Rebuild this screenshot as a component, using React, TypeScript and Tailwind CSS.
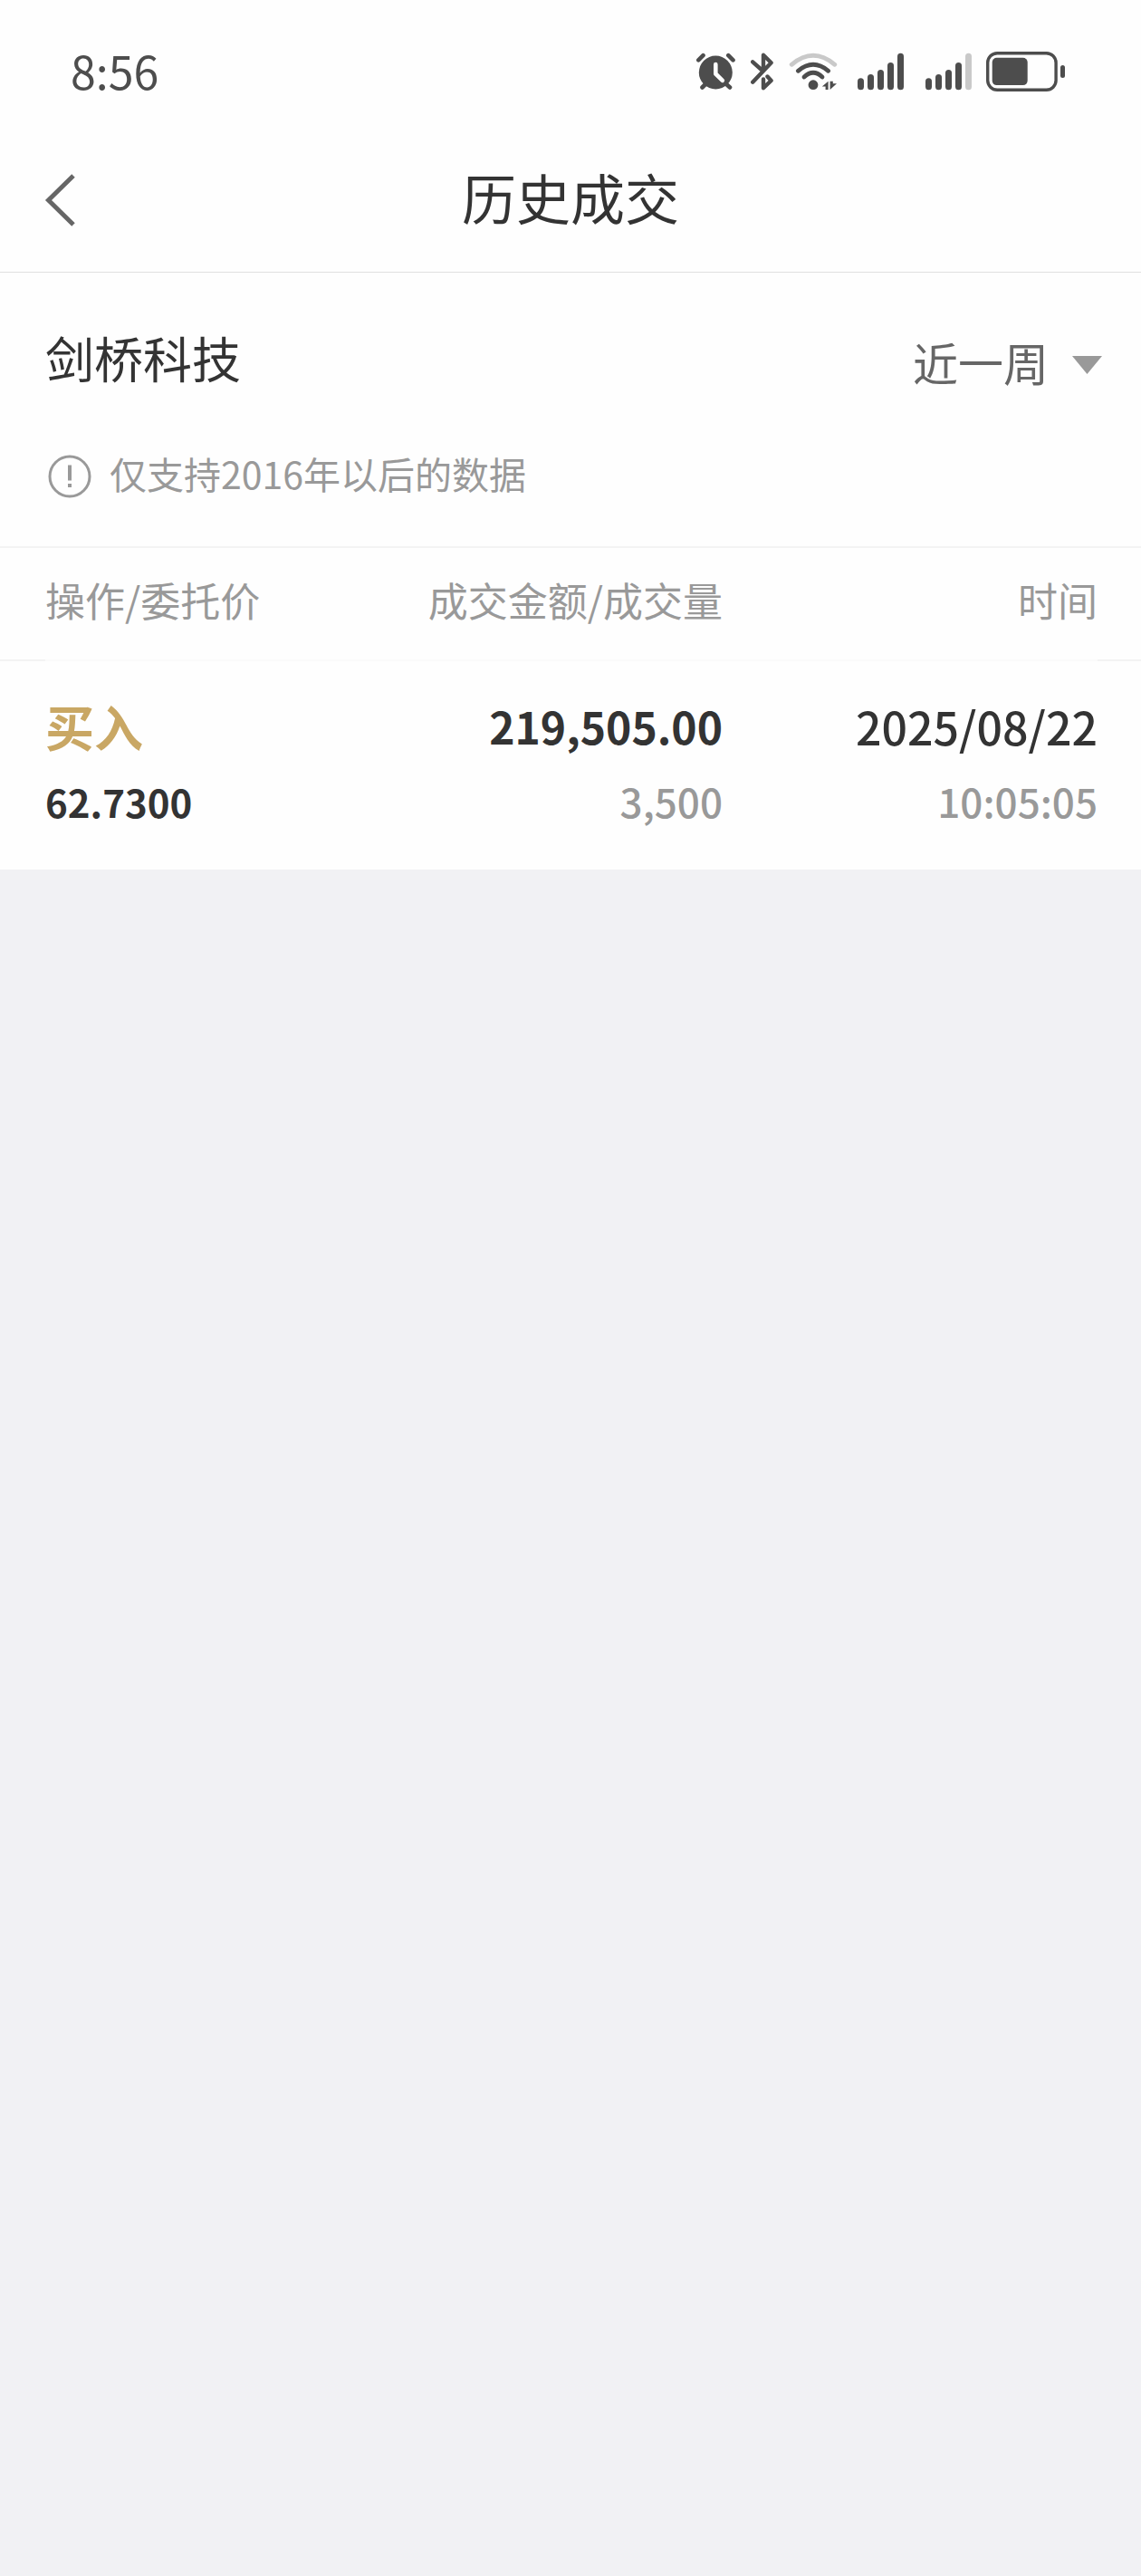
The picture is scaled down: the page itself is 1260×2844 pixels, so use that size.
import React from 'react';

const trades = [
  {
    id: 1,
    action: '买入',
    price: '62.7300',
    amount: '219,505.00',
    volume: '3,500',
    date: '2025/08/22',
    time: '10:05:05',
  },
];

const AlarmIcon = () => (
  <svg width="44" height="42" viewBox="0 0 44 42" fill="none" strokeLinecap="round" strokeLinejoin="round">
    <circle cx="21.3" cy="22" r="18.5" fill="#4d4d4d" />
    <path d="M2.3 8.4L7.5 3.2M35.3 3.2L40.5 8.4M6.5 38.5L12 33M37 38.5L31 33" stroke="#4d4d4d" strokeWidth="4.6" />
    <path d="M21.3 13V23.5L28.8 30.8" stroke="#fff" strokeWidth="4.6" />
  </svg>
);

const BluetoothIcon = () => (
  <svg width="26" height="42" viewBox="0 0 26 42" fill="none" stroke="#4d4d4d" strokeWidth="4.4" strokeLinecap="round" strokeLinejoin="round">
    <path d="M2.2 10.3L12.5 19.5M2.2 32.7L22.6 11.2L14 2.8V19" />
    <path d="M18.5 26.5L22.6 31L14 39.2V29.5" />
  </svg>
);

const WifiIcon = () => (
  <svg width="54" height="42" viewBox="0 0 54 42" fill="none" strokeWidth="4.8" strokeLinecap="round">
    <path d="M3.2 13.3Q27 -6.7 50.8 13.3" stroke="#c9c9c9" />
    <path d="M10.3 20.3Q27 6.3 43.7 20.3M17 27Q27 17.6 37 27" stroke="#4d4d4d" />
    <circle cx="27" cy="35.7" r="5.4" fill="#4d4d4d" />
    <path d="M36.8 37.5L43.6 31.8V41H40.6V37.5ZM45.6 31.8V41L53 34.2H48.8V31.8Z" fill="#4d4d4d" />
  </svg>
);

const SignalIcon = ({ weak = false }: { weak?: boolean }) => (
  <svg width="51" height="42" viewBox="0 0 51 42" fill="#4d4d4d">
    <rect x="0" y="28.3" width="7" height="13" rx="3.5" />
    <rect x="11" y="24" width="7" height="17.3" rx="3.5" />
    <rect x="22" y="19" width="7" height="22.3" rx="3.5" />
    <rect x="33" y="11" width="7" height="30.3" rx="3.5" />
    <rect x="44" y="0.7" width="7" height="40.6" rx="3.5" fill={weak ? '#c9c9c9' : '#4d4d4d'} />
  </svg>
);

const BatteryIcon = () => (
  <svg width="87" height="44" viewBox="0 0 87 44" fill="none">
    <rect x="1.7" y="1.7" width="75.4" height="40.6" rx="10.5" stroke="#4d4d4d" strokeWidth="3.4" />
    <rect x="6.7" y="6.7" width="39" height="30.4" rx="5" fill="#4d4d4d" />
    <rect x="82" y="15" width="5" height="14" rx="2.5" fill="#4d4d4d" />
  </svg>
);

const StatusBar = () => (
  <div className="flex h-[142px] items-center justify-between pt-4 pr-[84px] pl-[78px]">
    <span className="pb-1 text-[50px] leading-none text-[#4d4d4d]">8:56</span>
    <div className="flex items-center gap-4">
      <AlarmIcon />
      <BluetoothIcon />
      <WifiIcon />
      <div className="flex gap-6 pl-1.5">
        <SignalIcon />
        <SignalIcon weak />
      </div>
      <BatteryIcon />
    </div>
  </div>
);

const NavBar = () => (
  <header className="grid h-[159px] grid-cols-[1fr_auto_1fr] items-center border-b border-[#e0e0e0]">
    <button type="button" aria-label="返回" className="justify-self-start py-6 pr-6 pl-12">
      <svg width="36" height="60" viewBox="0 0 36 60" fill="none" stroke="#666" strokeWidth="5">
        <path d="M33 3L5.5 30L33 57" />
      </svg>
    </button>
    <h1 className="pb-2 text-[60px] leading-none text-[#333]">历史成交</h1>
  </header>
);

const Filter = () => (
  <section className="border-b-2 border-[#f3f3f3] pt-12">
    <div className="flex h-[100px] items-center justify-between pr-[43px] pl-[50px]">
      <h2 className="pb-2 text-[54px] leading-none text-[#333]">剑桥科技</h2>
      <div className="flex items-center gap-[26px]">
        <select
          aria-label="时间范围"
          defaultValue="week"
          className="appearance-none bg-transparent text-[50px] leading-[72px] text-[#666] outline-none"
        >
          <option value="week">近一周</option>
          <option value="month">近一月</option>
          <option value="quarter">近三月</option>
        </select>
        <svg className="mt-2" width="33" height="20" viewBox="0 0 33 20" fill="#999">
          <path d="M0 0H33L16.5 20Z" />
        </svg>
      </div>
    </div>
    <div className="flex h-[154px] items-center gap-5 px-[53px] text-[#999]">
      <svg width="48" height="48" viewBox="0 0 48 48" fill="none" stroke="currentColor" strokeWidth="3">
        <circle cx="24" cy="24" r="22" />
        <path d="M24 11.5V28.5M24 32V36" strokeWidth="4" />
      </svg>
      <p className="pb-2 text-[41px] leading-none">仅支持2016年以后的数据</p>
    </div>
  </section>
);

const TradeTable = () => (
  <table className="w-full table-fixed text-right leading-[83px]">
    <thead>
      {/* the divider is fainter between the side margins */}
      <tr className="h-[125px] bg-[linear-gradient(to_right,#f3f3f3_50px,#fafafa_50px,#fafafa_calc(100%_-_48px),#f3f3f3_calc(100%_-_48px))] bg-[length:100%_2px] bg-bottom bg-no-repeat text-[44px] text-[#999]">
        <th scope="col" className="pb-2.5 pl-[50px] text-left font-normal">操作/委托价</th>
        <th scope="col" className="pr-[42px] pb-2.5 font-normal whitespace-nowrap">成交金额/成交量</th>
        <th scope="col" className="pr-12 pb-2.5 font-normal">时间</th>
      </tr>
    </thead>
    <tbody>
      {trades.map((trade) => (
        <tr key={trade.id}>
          <td className="pt-[30px] pb-[34px] pl-[50px] text-left font-bold">
            <div className="text-[54px] text-[#c9a764]">{trade.action}</div>
            <div className="text-[42px] text-[#333]">{trade.price}</div>
          </td>
          <td className="pt-[30px] pr-[42px] pb-[34px]">
            <div className="text-[48px] font-bold text-[#333]">{trade.amount}</div>
            <div className="text-[44px] font-medium text-[#999]">{trade.volume}</div>
          </td>
          <td className="pt-[30px] pr-12 pb-[34px] font-medium">
            <div className="text-[50px] text-[#333]">{trade.date}</div>
            <div className="text-[44px] text-[#999]">{trade.time}</div>
          </td>
        </tr>
      ))}
    </tbody>
  </table>
);

const App = () => {
  return (
    <div lang="zh-CN" className="min-h-screen bg-[#f1f1f4] font-['Noto_Sans_CJK_SC',sans-serif]">
      <main className="bg-[#fefefe]">
        <StatusBar />
        <NavBar />
        <Filter />
        <TradeTable />
      </main>
    </div>
  );
};

export default App;
